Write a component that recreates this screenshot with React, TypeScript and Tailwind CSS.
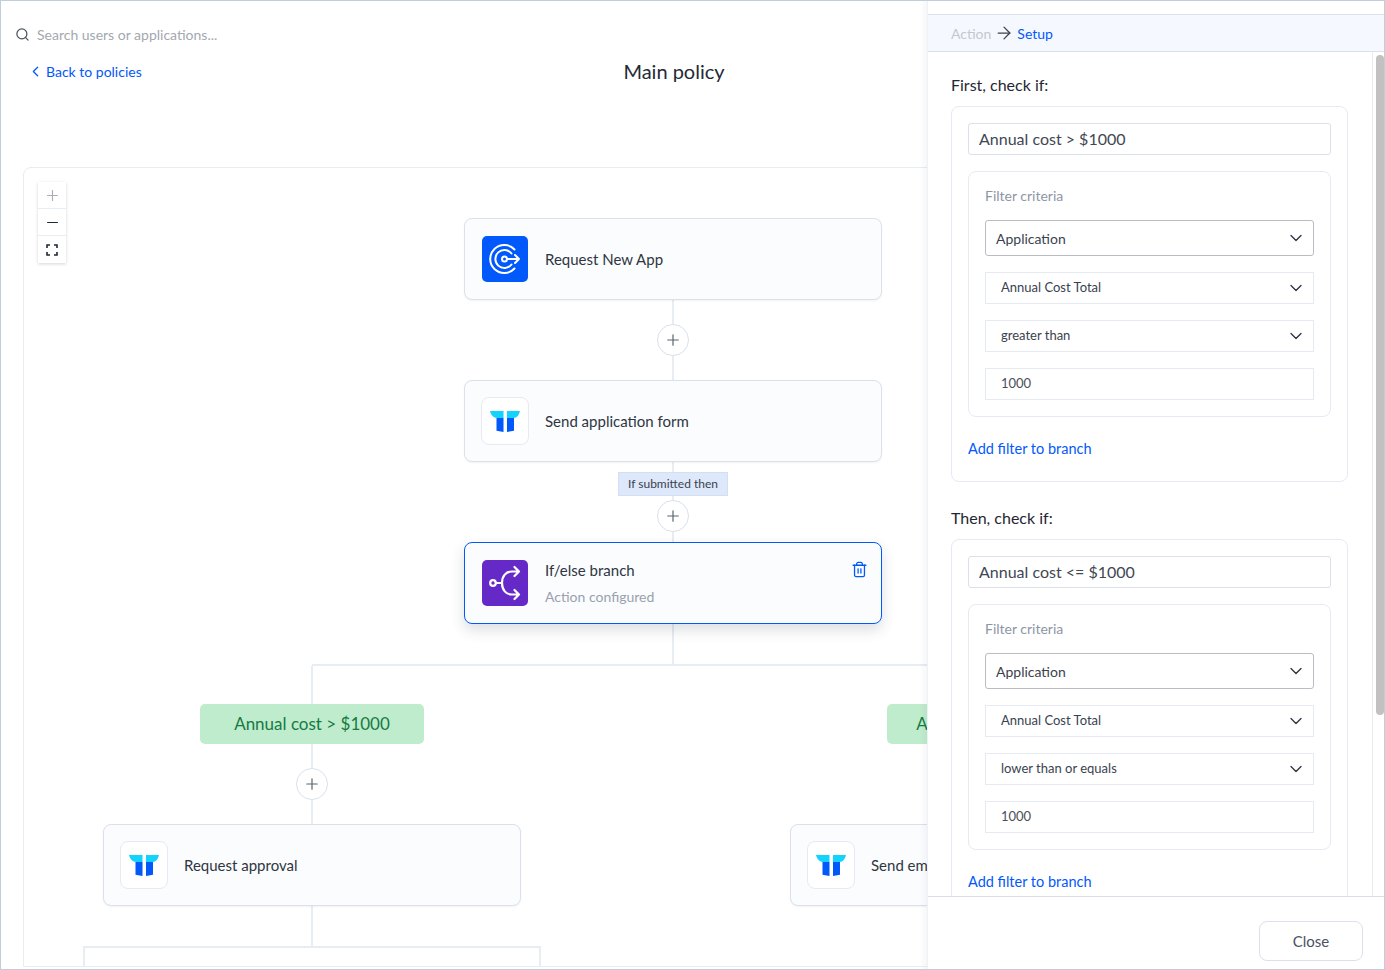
import { Search, ChevronLeft, Plus, Minus, ArrowRight, ChevronDown, Trash2 } from "lucide-react";

function AppLogo() {
  return (
    <div className="w-[46px] h-[46px] rounded-[5px] bg-[#0158fb] shrink-0 mx-px flex items-center justify-center">
      <svg width="46" height="46" viewBox="0 0 46 46" fill="none" stroke="#fff" strokeWidth="2" strokeLinecap="round" strokeLinejoin="round">
        <path d="M32.5 13.5A14 14 0 1 0 32.5 32.5" />
        <path d="M29.5 17.5A9 9 0 1 0 29.5 28.5" />
        <circle cx="22.5" cy="23" r="2.5" />
        <path d="M25.5 23H37M33 19l4 4-4 4" />
      </svg>
    </div>
  );
}

function FormLogo() {
  return (
    <div className="w-12 h-12 rounded-[8px] border border-[#e6eaf2] bg-white shrink-0">
      <svg width="46" height="46" viewBox="0 0 46 46">
        <path d="M8 13h13.5v7H15c-3.500 0-6-3-7-7z" fill="#12d3fb" />
        <path d="M38 13H25v7h6.500c3.500 0 5.500-3 6.500-7z" fill="#12d3fb" />
        <path d="M14.500 20h7v14l-7-1.200z" fill="#0158fb" />
        <path d="M25 20h7v12.800L25 34z" fill="#0158fb" />
      </svg>
    </div>
  );
}

function BranchLogo() {
  return (
    <div className="w-[46px] h-[46px] rounded-[5px] bg-[#6529c7] shrink-0 mx-px">
      <svg width="46" height="46" viewBox="0 0 46 46" fill="none" stroke="#fff" strokeWidth="2.200" strokeLinecap="round" strokeLinejoin="round">
        <circle cx="11" cy="23" r="2.800" />
        <path d="M14 23h6" />
        <path d="M20 23c0-7 4-11.500 10-11.500h7M32.500 7l4.500 4.500-4.500 4.500" />
        <path d="M20 23c0 7 4 11.500 10 11.500h7M32.500 30l4.500 4.500-4.500 4.500" />
      </svg>
    </div>
  );
}

function Node({ logo, title, sub, active }: { logo: React.ReactNode; title: string; sub?: string; active?: boolean }) {
  return (
    <div
      className={
        active
          ? "relative w-[418px] h-[82px] rounded-[8px] border border-[#0158fb] bg-[#fbfcfe] flex items-center pl-4 shadow-[0_6px_14px_rgba(40,50,70,0.16)]"
          : "relative w-[418px] h-[82px] rounded-[8px] border border-[#dbe0ea] bg-[#fbfcfe] flex items-center pl-4 shadow-[0_1px_2px_rgba(40,50,70,0.06)]"
      }
    >
      {logo}
      <div className="ml-4 text-[15px] text-[#2e3642]">
        <div className="leading-[20px]">{title}</div>
        {sub && <div className="mt-[7px] text-[14px] leading-[20px] text-[#98a1af]">{sub}</div>}
      </div>
      {active && <Trash2 className="absolute right-[13px] top-[18px] text-[#0158fb]" size={17} strokeWidth={1.800} />}
    </div>
  );
}

function Line({ h }: { h: string }) {
  return <div className={"w-[2px] bg-[#e8ecf3] " + h} />;
}

function AddButton() {
  return (
    <div className="w-8 h-8 rounded-full border border-[#dbe0ea] bg-white flex items-center justify-center text-[#5b6470]">
      <Plus size={18} strokeWidth={1.600} />
    </div>
  );
}

function SelectBox({ label, strong }: { label: string; strong?: boolean }) {
  return (
    <div
      className={
        strong
          ? "h-9 border border-[#b9bcc2] rounded-[3px] flex items-center justify-between pl-[10px] pr-[7px] text-[14px] text-[#3a424e]"
          : "h-8 border border-[#e6eaf2] flex items-center justify-between pl-[15px] pr-[7px] text-[13px] text-[#3a424e]"
      }
    >
      <span>{label}</span>
      <ChevronDown size={20} strokeWidth={1.600} className="text-[#2e3642]" />
    </div>
  );
}

function BranchForm({ heading, name, op }: { heading: string; name: string; op: string }) {
  return (
    <section>
      <h3 className="text-[16px] leading-[22px] text-[#1f2733]">{heading}</h3>
      <div className="mt-[10px] h-[376px] border border-[#e6eaf2] rounded-[8px] px-4 pt-4">
        <div className="h-8 border border-[#dbe0ea] rounded-[3px] flex items-center px-[10px] text-[16px] text-[#3f4753]">{name}</div>
        <div className="mt-4 h-[246px] border border-[#e6eaf2] rounded-[8px] px-4 pt-[14px]">
          <div className="text-[14px] leading-[20px] text-[#8d96a5]">Filter criteria</div>
          <div className="mt-[14px] flex flex-col gap-4">
            <SelectBox label="Application" strong />
            <SelectBox label="Annual Cost Total" />
            <SelectBox label={op} />
            <div className="h-8 border border-[#e6eaf2] flex items-center pl-[15px] text-[13px] text-[#4a4f58]">1000</div>
          </div>
        </div>
        <div className="mt-[22px] text-[14.500px] leading-[20px] text-[#0158fb]">Add filter to branch</div>
      </div>
    </section>
  );
}

export default function App() {
  return (
    <div className="relative w-[1385px] h-[970px] overflow-hidden bg-white border border-[#c3ccda] font-['Lato','Noto_Sans',sans-serif]">
      {/* page header */}
      <div className="flex items-center h-[20px] mt-[23px] ml-[14px] gap-[7px]">
        <Search size={15} strokeWidth={2} className="text-[#4a5361]" />
        <span className="text-[14px] text-[#a3a8b0]">Search users or applications...</span>
      </div>
      <div className="relative h-[28px] mt-[13px] flex items-center justify-center">
        <div className="absolute left-[26px] flex items-center gap-[2px] text-[14px] text-[#0158fb]">
          <ChevronLeft size={17} strokeWidth={1.800} />
          <span>Back to policies</span>
        </div>
        <h1 className="ml-[-37px] text-[20px] text-[#232a35]">Main policy</h1>
      </div>

      {/* canvas */}
      <div className="relative mt-[82px] ml-[22px] h-[800px] border border-[#e8ecf3] rounded-tl-[8px] overflow-hidden">
        <div className="absolute left-[14px] top-[14px] w-[28px] bg-white shadow-[0_1px_3px_rgba(40,50,70,0.2)] flex flex-col">
          <div className="h-[27px] flex items-center justify-center border-b border-[#e8ecf3] text-[#a8adb5]">
            <Plus size={17} strokeWidth={1.600} />
          </div>
          <div className="h-[27px] flex items-center justify-center border-b border-[#e8ecf3] text-[#1f2733]">
            <Minus size={17} strokeWidth={1.600} />
          </div>
          <div className="h-[27px] flex items-center justify-center">
            <svg width="14" height="14" viewBox="0 0 14 14" fill="none" stroke="#1f2733" strokeWidth="1.600">
              <path d="M2 5V2h3M9 2h3v3M12 9v3H9M5 12H2V9" />
            </svg>
          </div>
        </div>

        <div className="ml-[440px] w-[418px] pt-[50px] flex flex-col items-center">
          <Node logo={<AppLogo />} title="Request New App" />
          <Line h="h-6" />
          <AddButton />
          <Line h="h-6" />
          <Node logo={<FormLogo />} title="Send application form" />
          <Line h="h-[10px]" />
          <div className="h-6 px-[9px] bg-[#dde9fb] border border-[#d3e0f3] flex items-center text-[12px] text-[#3a424e]">If submitted then</div>
          <Line h="h-1" />
          <AddButton />
          <Line h="h-[10px]" />
          <Node logo={<BranchLogo />} title="If/else branch" sub="Action configured" active />
          <Line h="h-10" />
        </div>

        <div className="ml-[288px] w-[688px] h-[2px] bg-[#e8ecf3]" />

        <div className="flex ml-[79px] gap-[269px]">
          <div className="w-[418px] flex flex-col items-center">
            <Line h="h-[38px]" />
            <div className="w-[224px] h-10 rounded-[5px] bg-[#bfeccd] flex items-center justify-center text-[17px] text-[#157a42]">Annual cost &gt; $1000</div>
            <Line h="h-6" />
            <AddButton />
            <Line h="h-6" />
            <Node logo={<FormLogo />} title="Request approval" />
            <Line h="h-10" />
            <div className="w-[458px] h-[40px] shrink-0 border-2 border-b-0 border-[#e8ecf3]" />
          </div>
          <div className="w-[418px] flex flex-col items-center">
            <Line h="h-[38px]" />
            <div className="w-[224px] h-10 rounded-[5px] bg-[#bfeccd] flex items-center justify-center text-[17px] text-[#157a42]">Annual cost &lt;= $1000</div>
            <Line h="h-6" />
            <AddButton />
            <Line h="h-6" />
            <Node logo={<FormLogo />} title="Send email" />
          </div>
        </div>
      </div>

      {/* side drawer */}
      <aside className="absolute right-0 top-0 bottom-0 w-[457px] bg-white border-l border-[#eef1f5] shadow-[-3px_0_6px_rgba(40,50,70,0.05)] flex flex-col">
        <div className="mt-[13px] h-[38px] shrink-0 bg-[#f5f8fe] border-y border-[#dbe0ea] flex items-center pl-[23px] text-[14px]">
          <span className="text-[#c3c8d0]">Action</span>
          <ArrowRight size={20} strokeWidth={1.500} className="mx-[3px] text-[#3a424e]" />
          <span className="text-[#0158fb]">Setup</span>
        </div>
        <div className="flex-1 min-h-0 flex overflow-hidden">
          <div className="flex-1 pl-[23px] pr-6 pt-[22px] flex flex-col gap-[25px]">
            <BranchForm heading="First, check if:" name="Annual cost > $1000" op="greater than" />
            <BranchForm heading="Then, check if:" name="Annual cost <= $1000" op="lower than or equals" />
          </div>
          <div className="w-3 shrink-0 border-l border-[#e8ecf3] pl-[3px] pt-[3px]">
            <div className="w-[8px] h-[660px] rounded-full bg-[#c1c1c1]" />
          </div>
        </div>
        <div className="h-[73px] shrink-0 border-t border-[#d8dde6] bg-white flex items-start justify-end pt-6 pr-[21px]">
          <button className="w-[104px] h-10 rounded-[8px] border border-[#dbe0ea] text-[15px] text-[#4a5361]">Close</button>
        </div>
      </aside>
    </div>
  );
}
